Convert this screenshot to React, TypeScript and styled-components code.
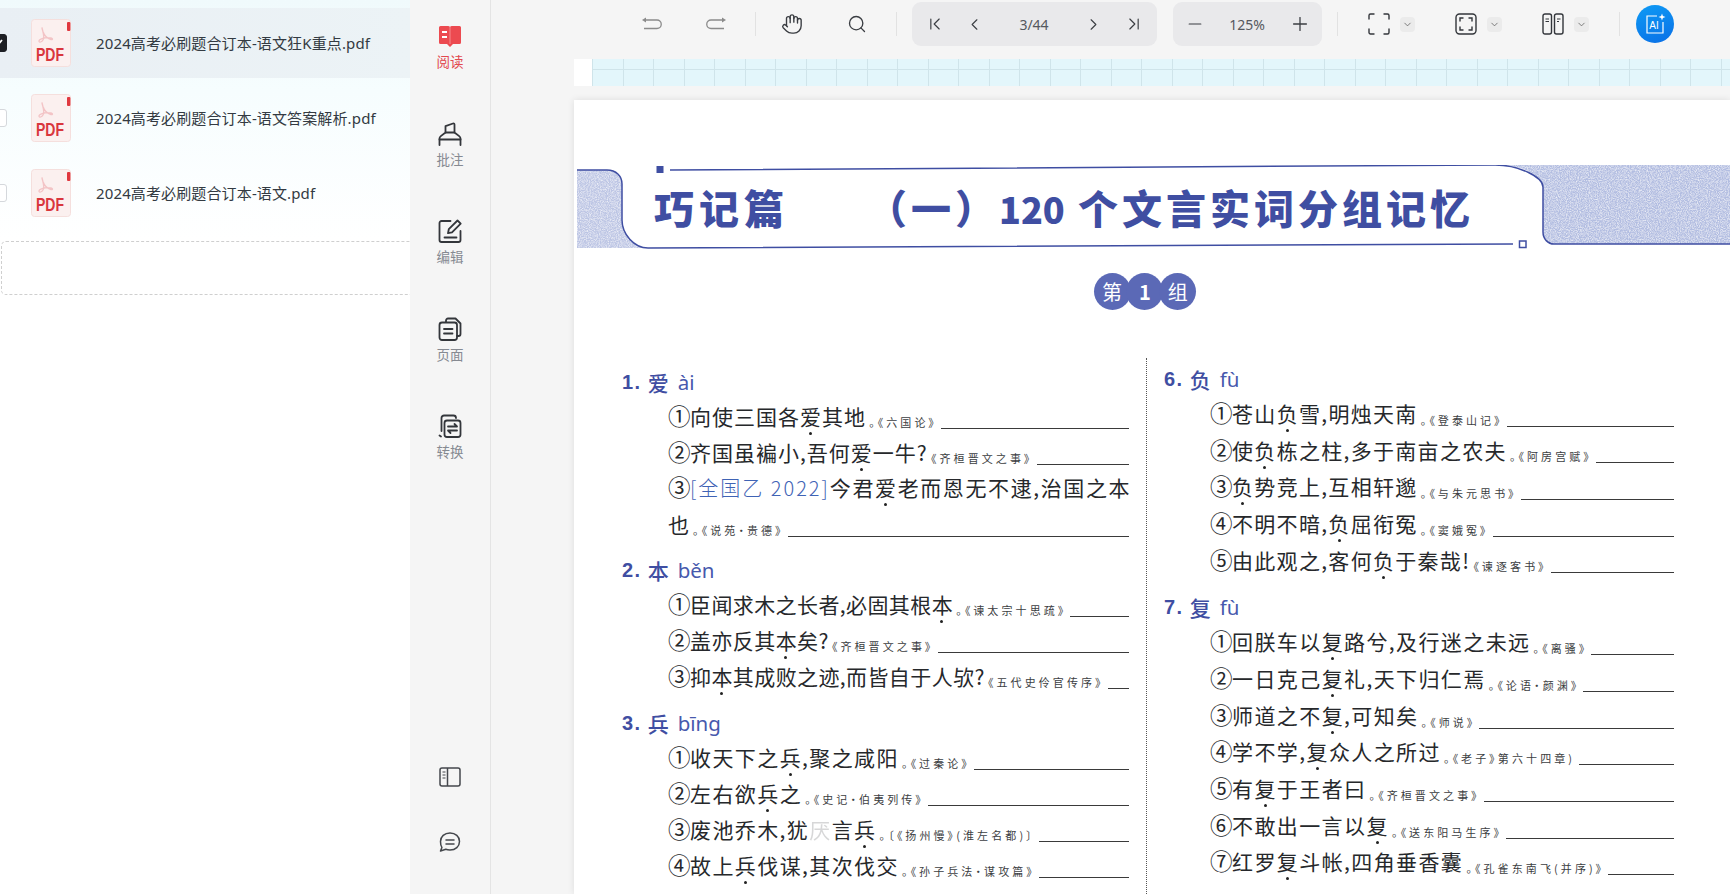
import React from 'react';
import styled, { createGlobalStyle } from 'styled-components';
import { ChevronFirst, ChevronLast, ChevronLeft, ChevronRight, ChevronDown, Hand, Minus, Plus, Search } from 'lucide-react';

const GlobalStyle = createGlobalStyle`
  html, body { margin: 0; padding: 0; height: 100%; overflow: hidden; }
  body { font-family: "Noto Sans", "Noto Sans CJK SC", sans-serif; background: #f5f5f5; }
`;

const Shell = styled.div`
  display: grid;
  grid-template-columns: 410px 81px 1fr;
  width: 1730px;
  height: 894px;
  overflow: hidden;
`;

/* ---------- file list ---------- */

const FilePanel = styled.aside`
  display: flex;
  flex-direction: column;
  gap: 5px;
  padding-top: 8px;
  overflow: hidden;
  background: linear-gradient(to bottom, #f0fafc 0, #f6fdfe 90px, #ffffff 240px);
`;

const FileRow = styled.div<{ $selected?: boolean }>`
  flex: none;
  display: flex;
  align-items: center;
  height: 70px;
  background: ${p => (p.$selected ? 'linear-gradient(90deg, #e9eff4, #ecf3f6)' : 'transparent')};
`;

const Check = styled.span<{ $checked?: boolean }>`
  flex: none;
  display: flex;
  align-items: center;
  justify-content: center;
  width: 18px;
  height: 18px;
  margin-left: -11px;
  margin-right: 24px;
  box-sizing: border-box;
  border-radius: 3px;
  border: 1px solid ${p => (p.$checked ? '#1d1f24' : '#d5d8dc')};
  background: ${p => (p.$checked ? '#1d1f24' : '#fff')};
`;

const FileName = styled.span`
  margin: -2px 0 0 25px;
  font-size: 15px;
  letter-spacing: 0.13px;
  color: #333a42;
  white-space: nowrap;
`;

const DropZone = styled.div`
  flex: none;
  margin: 8px -20px 0 1px;
  height: 54px;
  box-sizing: border-box;
  border: 1px dashed #cfcfcf;
  border-radius: 5px;
`;

const PdfIcon = () => (
  <svg width="40" height="48" viewBox="0 0 40 48">
    <rect x="0.5" y="0.5" width="39" height="47" rx="3" fill="#fbf0ef" stroke="#f5dfdd" />
    <rect x="36" y="3" width="3.4" height="9" rx="1" fill="#e0383f" />
    <path d="M11 9c1 5 3 9 1 12-1 2-4 3-4 1 0-2 6-4 12-3 2 .4 2 2 0 1.5-4-1-7-5-8-8-.6-2-1-4-1-3.500z" fill="none" stroke="#f3c4c6" strokeWidth="1.300" />
    <text x="5" y="42" fontFamily="Liberation Sans, sans-serif" fontSize="18" fontWeight="700" fill="#d9363d" textLength="28" lengthAdjust="spacingAndGlyphs">PDF</text>
  </svg>
);

/* ---------- left rail ---------- */

const Rail = styled.nav`
  display: flex;
  flex-direction: column;
  justify-content: space-between;
  padding: 24px 0 42px;
  box-sizing: border-box;
  height: 894px;
  border-right: 1px solid #e4e4e4;
  background: #f5f5f5;
`;

const RailGroup = styled.div`
  display: flex;
  flex-direction: column;
  align-items: center;
`;

const RailItem = styled.div<{ $active?: boolean }>`
  display: flex;
  flex-direction: column;
  align-items: center;
  height: 97.500px;
  font-size: 13.500px;
  line-height: 18px;
  color: ${p => (p.$active ? '#e2494f' : '#868a92')};

  svg { margin-bottom: 5px; }
`;

const RailFoot = styled.div`
  display: flex;
  flex-direction: column;
  align-items: center;
  gap: 45px;
`;

const railStroke = { fill: 'none', stroke: '#33363b', strokeWidth: 1.800, strokeLinecap: 'round', strokeLinejoin: 'round' } as const;

const ReadIcon = () => (
  <svg width="24" height="24" viewBox="0 0 24 24">
    <path d="M2.500 2h7c1.200 0 2 .4 2.500 1 .5-.6 1.300-1 2.500-1h7A1.500 1.500 0 0 1 23 3.500v15a1.500 1.500 0 0 1-1.500 1.500H15l-3 3-3-3H2.500A1.500 1.500 0 0 1 1 18.500v-15A1.500 1.500 0 0 1 2.500 2z" fill="#ec4a50" />
    <path d="M12 3v17" stroke="#f58a8d" strokeWidth="1" />
    <path d="M4 8h5M4 13h5" stroke="#fff" strokeWidth="2" />
  </svg>
);

const MarkIcon = () => (
  <svg width="24" height="24" viewBox="0 0 24 24" {...railStroke}>
    <path d="M1.500 23v-6.500c0-1 .5-1.800 1.300-2.400L7.500 10.500V4.200L15 1.500c1-.3 1.500.3 1.500 1.300v7.700l4.700 3.600c.8.600 1.300 1.400 1.300 2.400V23" />
    <path d="M7.500 10.500h9M1.500 17.500h21" />
  </svg>
);

const EditIcon = () => (
  <svg width="24" height="24" viewBox="0 0 24 24" {...railStroke}>
    <path d="M12.500 2H3.500A2 2 0 0 0 1.500 4v17a2 2 0 0 0 2 2h17a2 2 0 0 0 2-2v-9" />
    <path d="M19.500 1.500l3.200 3.200-8.700 8.700-4 .8.800-4z" />
    <path d="M6.500 18.500h12" />
  </svg>
);

const PagesIcon = () => (
  <svg width="24" height="24" viewBox="0 0 24 24" {...railStroke}>
    <path d="M8 5V3.500A2 2 0 0 1 10 1.500h7.500l5 5V17a2 2 0 0 1-2 2H19" />
    <rect x="1.500" y="5.500" width="17.500" height="17.500" rx="2.500" />
    <path d="M6 12h8.500M6 16.500h8.500" />
  </svg>
);

const ConvertIcon = () => (
  <svg width="24" height="24" viewBox="0 0 24 24" {...railStroke}>
    <path d="M3.500 17V4a2.500 2.500 0 0 1 2.500-2.500h9.500A2.500 2.500 0 0 1 18 4" />
    <path d="M1.500 21.500l1.500 1" />
    <rect x="6.500" y="6.500" width="16" height="16.500" rx="2.500" />
    <path d="M10 12.500h9l-2.500-2.500M19 16.500h-9l2.500 2.500" />
  </svg>
);

const PanelIcon = () => (
  <svg width="22" height="20" viewBox="0 0 22 20" fill="none" stroke="#44474c" strokeWidth="1.500">
    <rect x="1" y="1" width="20" height="18" rx="2" />
    <path d="M8.500 1v18" />
    <path d="M3.500 5h3M3.500 8h3M3.500 11h3" strokeWidth="1.200" />
  </svg>
);

const ChatIcon = () => (
  <svg width="22" height="20" viewBox="0 0 22 20" fill="none" stroke="#44474c" strokeWidth="1.500" strokeLinejoin="round">
    <path d="M11 1c5.500 0 9.500 3.600 9.500 8.500S16.500 18 11 18c-1.400 0-3-.2-4.200-.7L1.500 19l1.400-3.600C1.800 14 1.500 11.600 1.500 9.500 1.500 4.600 5.500 1 11 1z" />
    <path d="M7 8h8M7 12h8" strokeLinecap="round" />
  </svg>
);

/* ---------- toolbar ---------- */

const Main = styled.main`
  display: flex;
  flex-direction: column;
  min-width: 0;
  overflow: hidden;
  background: #f5f5f5;
`;

const Toolbar = styled.div`
  flex: none;
  display: flex;
  align-items: center;
  box-sizing: border-box;
  height: 59px;
  padding: 2px 0 13px 128.500px;
  color: #3a3d42;
`;

const Tool = styled.span<{ $w?: number }>`
  flex: none;
  display: flex;
  align-items: center;
  justify-content: center;
  width: ${p => p.$w ?? 64.5}px;
  height: 44px;
`;

const Sep = styled.span<{ $l?: number; $r?: number }>`
  flex: none;
  width: 1px;
  height: 24px;
  margin: 0 ${p => p.$r ?? 4}px 0 ${p => p.$l ?? 6.5}px;
  background: #e2e2e2;
`;

const Pill = styled.div<{ $pad: number; $gapLeft: number }>`
  flex: none;
  display: flex;
  align-items: center;
  height: 44px;
  padding: 0 ${p => p.$pad}px;
  margin-left: ${p => p.$gapLeft}px;
  border-radius: 9px;
  background: #e9e9eb;
`;

const PillText = styled.span<{ $w: number }>`
  width: ${p => p.$w}px;
  text-align: center;
  font-size: 14px;
  color: #55585e;
`;

const ViewTool = styled.div<{ $gap: number }>`
  flex: none;
  display: flex;
  align-items: center;
  gap: 7px;
  margin-right: ${p => p.$gap}px;
`;

const Caret = styled.span`
  display: flex;
  align-items: center;
  justify-content: center;
  width: 15px;
  height: 15px;
  border-radius: 4px;
  background: #ebebeb;
  color: #555;
`;

const AiBadge = styled.span`
  flex: none;
  display: flex;
  align-items: center;
  justify-content: center;
  width: 38px;
  height: 38px;
  margin-left: 16px;
  border-radius: 50%;
  background: linear-gradient(160deg, #0e9bf5, #0a6fe6);
`;

const UndoIcon = ({ flip }: { flip?: boolean }) => (
  <svg width="22" height="16" viewBox="0 0 22 16" fill="none" stroke="#8b8b8b" strokeWidth="1.300" style={flip ? { transform: 'scaleX(-1)' } : undefined}>
    <path d="M3 4h13a4 4 0 0 1 0 8.500H3" />
    <path d="M1 4l4-2.500v5z" fill="#8b8b8b" stroke="none" />
  </svg>
);

const FullIcon = () => (
  <svg width="22" height="22" viewBox="0 0 22 22" fill="none" stroke="#33363b" strokeWidth="1.400" strokeLinecap="round">
    <path d="M1 6V2.500A1.500 1.500 0 0 1 2.500 1H6M16 1h3.500A1.500 1.500 0 0 1 21 2.500V6M21 16v3.500a1.500 1.500 0 0 1-1.500 1.500H16M6 21H2.500A1.500 1.500 0 0 1 1 19.500V16" />
  </svg>
);

const FitIcon = () => (
  <svg width="22" height="22" viewBox="0 0 22 22" fill="none" stroke="#33363b" strokeWidth="1.400" strokeLinecap="round">
    <rect x="1" y="1" width="20" height="20" rx="3.500" />
    <path d="M5 8V5h3M14 5h3v3M17 14v3h-3M8 17H5v-3" />
  </svg>
);

const SplitIcon = () => (
  <svg width="22" height="22" viewBox="0 0 22 22" fill="none" stroke="#33363b" strokeWidth="1.400">
    <rect x="1" y="1" width="8.500" height="20" rx="2" />
    <rect x="12.500" y="1" width="8.500" height="20" rx="2" />
    <path d="M3.500 6h3.500M3.500 8.500h3.500M15 6h3.500M15 8.500h2" strokeWidth="1.100" />
  </svg>
);

const AiIcon = () => (
  <svg width="22" height="22" viewBox="0 0 22 22" fill="none" stroke="#fff" strokeWidth="1.200">
    <path d="M13 3H3v17h16V9" />
    <path d="M18 0.500l.9 2.600 2.600.9-2.600.9-.9 2.600-.9-2.600-2.600-.9 2.600-.9z" fill="#fff" stroke="none" />
    <text x="5.300" y="15.500" fontFamily="Liberation Sans, sans-serif" fontSize="10" fill="#fff" stroke="none">AI</text>
  </svg>
);

/* ---------- document ---------- */

const Viewport = styled.div`
  flex: 1;
  min-height: 0;
  padding-left: 83px;
  overflow: hidden;
`;

const PrevSheet = styled.div`
  height: 27px;
  padding-left: 18px;
  background: #fff;
`;

const GraphPaper = styled.div`
  height: 100%;
  background-color: #e3f6fb;
  background-image:
    repeating-linear-gradient(90deg, #cfe4ea 0 1px, transparent 1px 30.500px),
    linear-gradient(to bottom, transparent 10px, #cfe4ea 10px, #cfe4ea 11px, transparent 11px);
`;

const Sheet = styled.article`
  margin-top: 14px;
  height: 794px;
  padding-top: 65px;
  box-sizing: border-box;
  background: #fff;
  box-shadow: 0 0 7px rgba(0, 0, 0, 0.1);
  font-family: "Noto Sans CJK SC", sans-serif;
  overflow: hidden;
`;

const Banner = styled.header`
  position: relative;
  display: flex;
  align-items: center;
  height: 85px;
  padding: 0 0 2px 80px;
  box-sizing: border-box;
  color: #3f4ea2;
  font-size: 40px;
  font-weight: 900;
  white-space: nowrap;
`;

const BannerArt = styled.svg`
  position: absolute;
  left: 0;
  top: 0;
`;

const BannerText = styled.span<{ $offset?: number; $ls?: number }>`
  position: relative;
  margin-left: ${p => p.$offset ?? 0}px;
  letter-spacing: ${p => p.$ls ?? 4}px;
`;

const BannerDigits = styled.span`
  font-size: 36px;
  letter-spacing: 0;
`;

const Badge = styled.div`
  display: flex;
  margin: 22.500px 0 0 519.500px;
`;

const BadgeDisc = styled.span<{ $bold?: boolean }>`
  display: flex;
  align-items: center;
  justify-content: center;
  width: 37px;
  height: 37px;
  margin-right: -4.200px;
  border-radius: 50%;
  background: #5b69b6;
  color: #fff;
  font-size: 20px;
  font-weight: ${p => (p.$bold ? 700 : 400)};
`;

const Columns = styled.div`
  display: grid;
  grid-template-columns: 507px 1px 510px;
  column-gap: 17px;
  margin: 48.500px 0 0 48px;
`;

const Divider = styled.div`
  border-left: 1px dotted #555;
  height: 540px;
`;

const Column = styled.div<{ $top: number }>`
  padding-top: ${p => p.$top}px;
`;

const Heading = styled.h3<{ $gap: number }>`
  display: flex;
  align-items: center;
  gap: 6px;
  height: 30px;
  margin: ${p => p.$gap}px 0 3px;
  color: #3f4ea2;
  font-size: 21px;
  font-weight: 500;
  white-space: nowrap;
`;

const HeadNo = styled.span`
  font-family: "Liberation Sans", sans-serif;
  font-weight: 700;
  font-size: 20px;
  letter-spacing: 1.500px;
`;

const Pinyin = styled.span`
  margin-left: 3px;
  font-family: "Noto Sans", sans-serif;
  font-weight: 400;
  font-size: 20.500px;
  color: #4759ad;
`;

const Row = styled.div<{ $h: number }>`
  display: flex;
  align-items: center;
  height: ${p => p.$h}px;
  padding-left: 46px;
  white-space: nowrap;
`;

const Verse = styled.span<{ $ls: number }>`
  margin-bottom: 5px;
  font-size: 21px;
  line-height: 30px;
  letter-spacing: ${p => p.$ls}px;
  font-weight: 400;
  color: #26282b;
  font-feature-settings: "halt";
`;

const Circled = styled.span`
  font-size: 22.500px;
  line-height: 20px;
  letter-spacing: -0.500px;
`;

const Tag = styled.span`
  font-size: 20px;
  letter-spacing: 2px;
  font-weight: 300;
  color: #3f63b5;
`;

const Spread = styled.span`
  letter-spacing: 1.600px;
`;

const Dotted = styled.span`
  position: relative;

  &::after {
    content: '';
    position: absolute;
    left: 50%;
    bottom: -4px;
    width: 3px;
    height: 3px;
    margin-left: -2px;
    border-radius: 50%;
    background: #222;
  }
`;

const Worn = styled.span`
  opacity: 0.18;
`;

const Source = styled.span`
  font-size: 11px;
  letter-spacing: 3.100px;
  color: #3c3e42;
  font-feature-settings: "palt";
  align-self: flex-end;
  margin: 0 0 6px 3px;
`;

const Blank = styled.span`
  flex: 1;
  align-self: flex-end;
  min-width: 0;
  margin: 0 0 7px 4px;
  border-bottom: 1px solid #3a3a3a;
`;

const BannerShape = () => (
  <BannerArt width="1156" height="85" viewBox="0 0 1156 85">
    <defs>
      <filter id="scan" x="0" y="0" width="100%" height="100%">
        <feTurbulence type="fractalNoise" baseFrequency="0.9" numOctaves="2" seed="4" result="noise" />
        <feColorMatrix in="noise" type="matrix" values="0 0 0 0 1  0 0 0 0 1  0 0 0 0 1  1.400 0 0 0 -0.500" result="speck" />
        <feComposite in="speck" in2="SourceGraphic" operator="in" result="clipped" />
        <feMerge>
          <feMergeNode in="SourceGraphic" />
          <feMergeNode in="clipped" />
        </feMerge>
      </filter>
    </defs>
    <path d="M3 5h30c9 0 15 6 15 14v36c0 14 12 28 26 28H3z" fill="#bcc5e4" filter="url(#scan)" />
    <path d="M926 0h230v79H980c-6 0-11-5-11-12V22C969 12 950 0 926 0z" fill="#b2bde1" filter="url(#scan)" />
    <path d="M3 5h30c9 0 15 6 15 14v36c0 14 12 28 26 28l865-4" fill="none" stroke="#3f4ea2" strokeWidth="1.500" />
    <path d="M96 5l825-5c24 0 48 12 48 22v45c0 7 5 12 11 12h176" fill="none" stroke="#3f4ea2" strokeWidth="1.500" />
    <rect x="82.500" y="1" width="7" height="7" fill="#3f4ea2" />
    <rect x="945.500" y="76" width="6.500" height="6.500" fill="#fff" stroke="#3f4ea2" strokeWidth="1.500" />
  </BannerArt>
);

interface Line {
  mark?: string;
  text: string;
  source: string;
  tag?: string;
  tail?: string;
  noBlank?: boolean;
}

interface Entry {
  no: string;
  word: string;
  pinyin: string;
  gap: number;
  ls: number;
  lines: Line[];
}

// *字* marks the character with the dot under it, ~字~ a character worn off the scan
const renderVerse = (text: string) =>
  text.split(/(\*[^*]+\*|~[^~]+~)/).map((part, i) => {
    if (part.startsWith('*')) return <Dotted key={i}>{part.slice(1, -1)}</Dotted>;
    if (part.startsWith('~')) return <Worn key={i}>{part.slice(1, -1)}</Worn>;
    return part;
  });

const leftEntries: Entry[] = [
  {
    no: '1.', word: '爱', pinyin: 'ài', gap: 0, ls: 1,
    lines: [
      { mark: '①', text: '向使三国各*爱*其地', source: '。《六国论》' },
      { mark: '②', text: '齐国虽褊小,吾何*爱*一牛?', source: '《齐桓晋文之事》' },
      { mark: '③', text: '', tag: '[全国乙 2022]', tail: '今君*爱*老而恩无不逮,治国之本', source: '', noBlank: true },
      { text: '也', source: '。《说苑·贵德》' },
    ],
  },
  {
    no: '2.', word: '本', pinyin: 'běn', gap: 11, ls: 0.4,
    lines: [
      { mark: '①', text: '臣闻求木之长者,必固其根*本*', source: '。《谏太宗十思疏》' },
      { mark: '②', text: '盖亦反其*本*矣?', source: '《齐桓晋文之事》' },
      { mark: '③', text: '抑*本*其成败之迹,而皆自于人欤?', source: '《五代史伶官传序》' },
    ],
  },
  {
    no: '3.', word: '兵', pinyin: 'bīng', gap: 12, ls: 1.4,
    lines: [
      { mark: '①', text: '收天下之*兵*,聚之咸阳', source: '。《过秦论》' },
      { mark: '②', text: '左右欲*兵*之', source: '。《史记·伯夷列传》' },
      { mark: '③', text: '废池乔木,犹~厌~言*兵*', source: '。〔《扬州慢》(淮左名都)〕' },
      { mark: '④', text: '故上*兵*伐谋,其次伐交', source: '。《孙子兵法·谋攻篇》' },
    ],
  },
];

const rightEntries: Entry[] = [
  {
    no: '6.', word: '负', pinyin: 'fù', gap: 0, ls: 1.3,
    lines: [
      { mark: '①', text: '苍山*负*雪,明烛天南', source: '。《登泰山记》' },
      { mark: '②', text: '使*负*栋之柱,多于南亩之农夫', source: '。《阿房宫赋》' },
      { mark: '③', text: '*负*势竞上,互相轩邈', source: '。《与朱元思书》' },
      { mark: '④', text: '不明不暗,*负*屈衔冤', source: '。《窦娥冤》' },
      { mark: '⑤', text: '由此观之,客何*负*于秦哉!', source: '《谏逐客书》' },
    ],
  },
  {
    no: '7.', word: '复', pinyin: 'fù', gap: 12, ls: 1.4,
    lines: [
      { mark: '①', text: '回朕车以*复*路兮,及行迷之未远', source: '。《离骚》' },
      { mark: '②', text: '一日克己*复*礼,天下归仁焉', source: '。《论语·颜渊》' },
      { mark: '③', text: '师道之不*复*,可知矣', source: '。《师说》' },
      { mark: '④', text: '学不学,*复*众人之所过', source: '。《老子》第六十四章)' },
      { mark: '⑤', text: '有*复*于王者曰', source: '。《齐桓晋文之事》' },
      { mark: '⑥', text: '不敢出一言以*复*', source: '。《送东阳马生序》' },
      { mark: '⑦', text: '红罗*复*斗帐,四角垂香囊', source: '。《孔雀东南飞(并序)》' },
    ],
  },
];

const EntryBlock = ({ entry, rowHeight }: { entry: Entry; rowHeight: number }) => (
  <section>
    <Heading $gap={entry.gap}>
      <HeadNo>{entry.no}</HeadNo>
      <span>{entry.word}</span>
      <Pinyin>{entry.pinyin}</Pinyin>
    </Heading>
    {entry.lines.map((line, i) => (
      <Row key={i} $h={rowHeight}>
        <Verse $ls={entry.ls}>
          {line.mark && <Circled>{line.mark}</Circled>}
          {renderVerse(line.text)}
          {line.tag && <Tag>{line.tag}</Tag>}
          {line.tail && <Spread>{renderVerse(line.tail)}</Spread>}
        </Verse>
        {line.source && <Source>{line.source}</Source>}
        {!line.noBlank && <Blank />}
      </Row>
    ))}
  </section>
);

const files = ['2024高考必刷题合订本-语文狂K重点.pdf', '2024高考必刷题合订本-语文答案解析.pdf', '2024高考必刷题合订本-语文.pdf'];

const railItems = [
  { label: '阅读', icon: <ReadIcon />, active: true },
  { label: '批注', icon: <MarkIcon /> },
  { label: '编辑', icon: <EditIcon /> },
  { label: '页面', icon: <PagesIcon /> },
  { label: '转换', icon: <ConvertIcon /> },
];

const viewTools = [<FullIcon key="full" />, <FitIcon key="fit" />, <SplitIcon key="split" />];

export default function App() {
  return (
    <Shell>
      <GlobalStyle />
      <FilePanel>
        {files.map((name, i) => (
          <FileRow key={name} $selected={i === 0}>
            <Check $checked={i === 0}>
              {i === 0 && (
                <svg width="12" height="12" viewBox="0 0 12 12" fill="none" stroke="#fff" strokeWidth="1.800">
                  <path d="M2 6l3 3 5-6" />
                </svg>
              )}
            </Check>
            <PdfIcon />
            <FileName>{name}</FileName>
          </FileRow>
        ))}
        <DropZone />
      </FilePanel>

      <Rail>
        <RailGroup>
          {railItems.map(item => (
            <RailItem key={item.label} $active={item.active}>
              {item.icon}
              {item.label}
            </RailItem>
          ))}
        </RailGroup>
        <RailFoot>
          <PanelIcon />
          <ChatIcon />
        </RailFoot>
      </Rail>

      <Main>
        <Toolbar>
          <Tool><UndoIcon /></Tool>
          <Tool><UndoIcon flip /></Tool>
          <Sep />
          <Tool><Hand size={22} strokeWidth={1.5} /></Tool>
          <Tool><Search size={20} strokeWidth={1.6} /></Tool>
          <Sep />
          <Pill $pad={3} $gapLeft={11}>
            <Tool $w={40}><ChevronFirst size={20} strokeWidth={1.4} /></Tool>
            <Tool $w={40}><ChevronLeft size={19} strokeWidth={1.4} /></Tool>
            <PillText $w={79}>3/44</PillText>
            <Tool $w={40}><ChevronRight size={19} strokeWidth={1.4} /></Tool>
            <Tool $w={40}><ChevronLast size={20} strokeWidth={1.4} /></Tool>
          </Pill>
          <Pill $pad={2} $gapLeft={16}>
            <Tool $w={40}><Minus size={20} strokeWidth={1.4} /></Tool>
            <PillText $w={65}>125%</PillText>
            <Tool $w={40}><Plus size={22} strokeWidth={1.4} /></Tool>
          </Pill>
          <Sep $l={15} $r={27.5} />
          {viewTools.map((icon, i) => (
            <ViewTool key={i} $gap={i === 2 ? 23.5 : 37}>
              <Tool $w={28}>{icon}</Tool>
              <Caret><ChevronDown size={11} strokeWidth={1.6} /></Caret>
            </ViewTool>
          ))}
          <Sep $r={0} />
          <AiBadge><AiIcon /></AiBadge>
        </Toolbar>

        <Viewport>
          <PrevSheet><GraphPaper /></PrevSheet>
          <Sheet>
            <Banner>
              <BannerShape />
              <BannerText $ls={5}>巧记篇</BannerText>
              <BannerText $offset={78}>（一）<BannerDigits>120</BannerDigits> 个文言实词分组记忆</BannerText>
            </Banner>
            <Badge>
              <BadgeDisc>第</BadgeDisc>
              <BadgeDisc $bold>1</BadgeDisc>
              <BadgeDisc>组</BadgeDisc>
            </Badge>
            <Columns>
              <Column $top={9}>
                {leftEntries.map(entry => <EntryBlock key={entry.no} entry={entry} rowHeight={36} />)}
              </Column>
              <Divider />
              <Column $top={6}>
                {rightEntries.map(entry => <EntryBlock key={entry.no} entry={entry} rowHeight={36.7} />)}
              </Column>
            </Columns>
          </Sheet>
        </Viewport>
      </Main>
    </Shell>
  );
}
